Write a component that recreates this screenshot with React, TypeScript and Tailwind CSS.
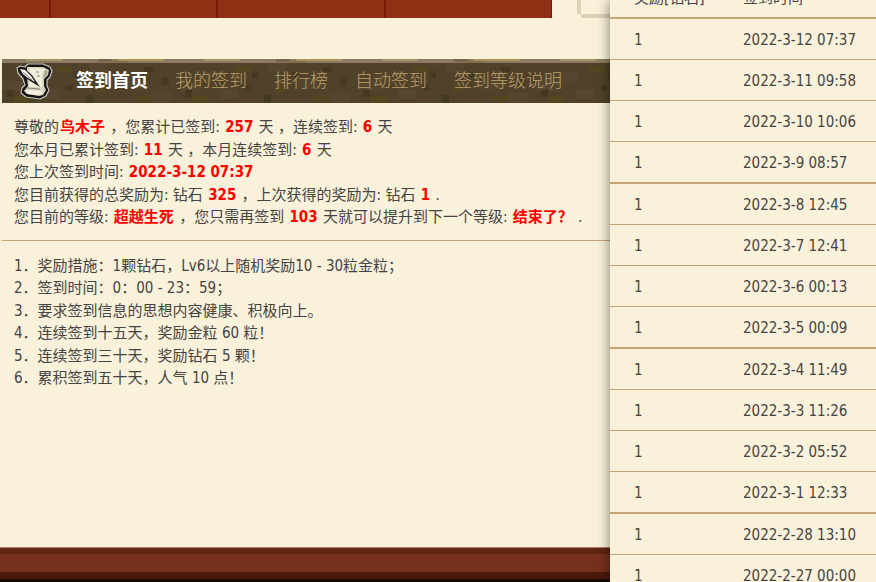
import React from "react";

const font =
  "font-['DejaVu_Sans_Condensed','Noto_Sans','Noto_Sans_CJK_SC',sans-serif]";

const tabs = ["签到首页", "我的签到", "排行榜", "自动签到", "签到等级说明"];

const records = [
  "2022-3-12 07:37",
  "2022-3-11 09:58",
  "2022-3-10 10:06",
  "2022-3-9 08:57",
  "2022-3-8 12:45",
  "2022-3-7 12:41",
  "2022-3-6 00:13",
  "2022-3-5 00:09",
  "2022-3-4 11:49",
  "2022-3-3 11:26",
  "2022-3-2 05:52",
  "2022-3-1 12:33",
  "2022-2-28 13:10",
  "2022-2-27 00:00",
];

const rules = [
  "奖励措施：1颗钻石，Lv6以上随机奖励10 - 30粒金粒；",
  "签到时间：0：00 - 23：59；",
  "要求签到信息的思想内容健康、积极向上。",
  "连续签到十五天，奖励金粒 60 粒！",
  "连续签到三十天，奖励钻石 5 颗！",
  "累积签到五十天，人气 10 点！",
];

function Texture() {
  return (
    <svg className="absolute inset-0 h-full w-full" aria-hidden="true">
      <defs>
        <pattern id="stone" width="178" height="44" patternUnits="userSpaceOnUse">
          <rect width="178" height="44" fill="#50422a" />
          <g fill="#55472f">
            <rect x="0" y="22" width="22" height="10" />
            <rect x="88" y="4" width="18" height="9" />
            <rect x="150" y="34" width="20" height="10" />
            <rect x="40" y="31" width="18" height="9" />
            <rect x="118" y="22" width="26" height="8" />
            <rect x="22" y="13" width="20" height="9" />
          </g>
          <g fill="#52471f">
            <rect x="54" y="7" width="16" height="6" />
            <rect x="12" y="37" width="16" height="7" />
            <rect x="95" y="24" width="9" height="9" />
            <rect x="132" y="37" width="18" height="5" />
          </g>
          <g fill="#453820">
            <rect x="5" y="31" width="7" height="7" />
            <rect x="72" y="12" width="6" height="7" />
            <rect x="65" y="26" width="6" height="6" />
            <rect x="84" y="36" width="7" height="8" />
            <rect x="112" y="13" width="6" height="6" />
            <rect x="160" y="18" width="7" height="8" />
            <rect x="142" y="8" width="10" height="5" />
          </g>
          <rect width="178" height="4" fill="#8a7b5e" />
          <rect x="24" width="36" height="2" fill="#a3946f" />
          <rect x="96" width="14" height="3" fill="#75654b" />
          <rect x="116" width="46" height="2" fill="#a8935f" />
          <rect x="108" y="2" width="18" height="2" fill="#7f7048" />
        </pattern>
      </defs>
      <rect width="100%" height="100%" fill="url(#stone)" />
    </svg>
  );
}

function ScrollIcon() {
  return (
    <svg width="38" height="38" viewBox="0 0 38 38" aria-hidden="true">
      <path d="M2 6 5 4 10 5 13 2 28 2 35 5 37 9 35 15 32 18 32 24 34 28 31 34 25 37 11 35 6 31 7 26 10 23 8 17 3 11Z" fill="#17140f" stroke="#c4c4c2" strokeWidth="1.2" strokeLinejoin="round" />
      <path d="M12 5 28 5 34 8 33 13 29 17 29 24 31 28 28 33 24 34 12 32 9 29 13 24 12 16Z" fill="#d8d4bd" />
      <path d="M15 6 30 7 27 13 27 25 14 25 14 14Z" fill="#f1eddb" />
      <path d="M10 28 26 29 28 31 24 33 13 32Z" fill="#f3efdc" />
      <path d="M30 8 33 10 31 14 28 16Z" fill="#aaa58d" />
      <path d="M4 7 10 7 17 13 25 25 15 19 8 14Z" fill="#23211d" />
      <path d="M5 7 10 8 16 14 20 20 13 16 8 12Z" fill="#f4f4f4" />
      <path d="M8 10 17 18M21 10h3M22 14h3M12 26l13 1" stroke="#8b8776" strokeWidth="1" />
    </svg>
  );
}

function B({ children }: { children: React.ReactNode }) {
  return <strong className="mx-px font-bold text-[#ff0000]">{children}</strong>;
}

export default function App() {
  return (
    <div lang="zh-CN" className={`${font} flex h-screen overflow-hidden bg-[#faf1db] text-[15px] text-[#444]`}>
      <main className="flex min-w-0 flex-1 flex-col">
        <div className="flex h-[18px] justify-between">
          <div className="flex w-[552px] border-r border-[#771b04] bg-[#8f3014]">
            <span className="w-[51px] border-r-2 border-[#771b04]" />
            <span className="w-[167px] border-r-2 border-[#771b04]" />
            <span className="w-[168px] border-r-2 border-[#771b04]" />
          </div>
          <div className="flex w-[33px] flex-col">
            <span className="h-[14px] border-l-4 border-[#ddd1b8]" />
            <span className="ml-1 h-1 bg-[#ddd1b8]" />
          </div>
        </div>

        <nav className="relative mt-[41px] ml-[2px] h-11 shrink-0">
          <Texture />
          <div className="relative flex h-full items-center pl-[13px]">
            <ScrollIcon />
            <div className="ml-[23px] flex gap-[27px] pb-[2px] text-[18px] whitespace-nowrap">
              {tabs.map((tab, i) => (
                <a key={tab} href="#" className={i === 0 ? "font-bold text-white" : "font-light text-[#bd9f69]"}>
                  {tab}
                </a>
              ))}
            </div>
          </div>
        </nav>

        <section className="ml-[2px] border-b border-[#c5a573] px-3 pt-[13px] pb-[11px] leading-normal whitespace-nowrap">
          <p>尊敬的<B>鸟木子</B> ，您累计已签到: <B>257</B> 天 ，连续签到: <B>6</B> 天</p>
          <p>您本月已累计签到: <B>11</B> 天 ，本月连续签到: <B>6</B> 天</p>
          <p>您上次签到时间: <B>2022-3-12 07:37</B></p>
          <p>您目前获得的总奖励为: 钻石 <B>325</B> ，上次获得的奖励为: 钻石 <B>1</B> .</p>
          <p>您目前的等级: <B>超越生死</B> ，您只需再签到 <B>103</B> 天就可以提升到下一个等级: <B>结束了？</B> .</p>
        </section>

        <ol className="ml-[2px] px-3 pt-[14px] leading-normal whitespace-nowrap">
          {rules.map((rule, i) => (
            <li key={rule}>{i + 1}．{rule}</li>
          ))}
        </ol>

        <footer className="mt-auto h-[35px] shrink-0 border-t border-[#a5806b]">
          <div className="h-[6px] bg-[#612513]" />
          <div className="h-[18px] bg-[#75311d]" />
          <div className="h-[7px] bg-[#4a1a0a]" />
          <div className="h-[3px] bg-[#180c02]" />
        </footer>
      </main>

      <aside className="relative w-[266px] shrink-0 bg-[#faf1db] shadow-[0_0_12px_rgba(0,0,0,0.5)]">
        <table className="-mt-[23px] w-full border-separate border-spacing-0 text-left whitespace-nowrap">
          <thead>
            <tr className="h-[42px]">
              <th className="w-[133px] border-b-2 border-[#c5a573] p-0 pt-[2px] pl-6 font-normal">奖励[钻石]</th>
              <th className="border-b-2 border-[#c5a573] p-0 pt-[2px] font-normal">签到时间</th>
            </tr>
          </thead>
          <tbody>
            {records.map((time, i) => {
              const line = i % 4 === 3 ? "h-[42px] border-b-2" : "h-[41px] border-b";
              return (
                <tr key={time}>
                  <td className={`${line} border-[#c5a573] p-0 pt-[2px] pl-6`}>1</td>
                  <td className={`${line} border-[#c5a573] p-0 pt-[2px]`}>{time}</td>
                </tr>
              );
            })}
          </tbody>
        </table>
      </aside>
    </div>
  );
}
